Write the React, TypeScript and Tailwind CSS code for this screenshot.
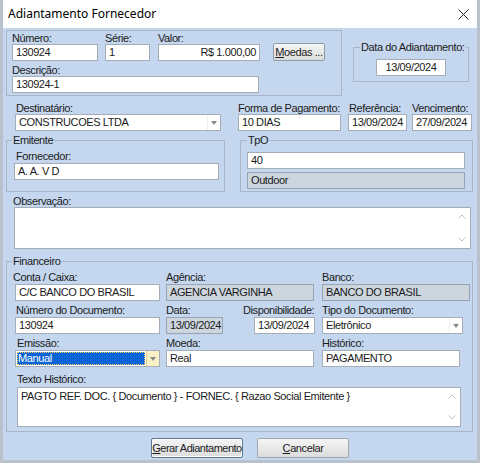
import type { ReactNode } from "react";

function Label({ children, className = "" }: { children: ReactNode; className?: string }) {
    return <div className={`h-[12px] leading-[12px] whitespace-nowrap ${className}`}>{children}</div>;
}

function Field({
    value,
    className = "",
    readOnly = false,
    align = "left",
}: {
    value: string;
    className?: string;
    readOnly?: boolean;
    align?: "left" | "right" | "center";
}) {
    const alignCls = align === "right" ? "text-right" : align === "center" ? "text-center" : "text-left";
    return (
        <div
            className={`h-[17px] border px-[3px] leading-[15px] whitespace-nowrap overflow-hidden ${alignCls} ${
                readOnly ? "bg-[#cdd5df] border-[#98a4b2]" : "bg-white border-[#a4adb8]"
            } ${className}`}
        >
            {value}
        </div>
    );
}

function Arrow() {
    return (
        <svg width="6" height="4" viewBox="0 0 6 4">
            <path d="M0 0 L6 0 L3 4 Z" fill="#8a8a8a" />
        </svg>
    );
}

function Combo({ value, className = "", focused = false }: { value: string; className?: string; focused?: boolean }) {
    return (
        <div className={`flex h-[17px] border border-[#a4adb8] bg-white ${className}`}>
            {focused ? (
                <div className="flex-1 p-[1px]">
                    <div className="h-full bg-[#0a64d6] text-white leading-[13px] px-[1px] outline-1 outline-dotted outline-[#f5d36a] -outline-offset-1">
                        {value}
                    </div>
                </div>
            ) : (
                <div className="flex-1 px-[3px] leading-[15px] whitespace-nowrap overflow-hidden">{value}</div>
            )}
            <div
                className={`w-[13px] flex items-center justify-center border-l ${
                    focused ? "bg-[#fbf1c6] border-[#e2cf8c]" : "bg-white border-[#eceff2]"
                }`}
            >
                <Arrow />
            </div>
        </div>
    );
}

function Memo({ value = "", className = "" }: { value?: string; className?: string }) {
    return (
        <div className={`flex border border-[#a4adb8] bg-white ${className}`}>
            <div className="flex-1 px-[3px] pt-[2px] leading-[13px] whitespace-nowrap overflow-hidden">{value}</div>
            <div className="w-[16px] flex flex-col items-center justify-between py-[6px]">
                <svg width="8" height="5" viewBox="0 0 8 5">
                    <path d="M0.5 4.5 L4 1 L7.5 4.5" fill="none" stroke="#c3c3c3" strokeWidth="1" />
                </svg>
                <svg width="8" height="5" viewBox="0 0 8 5">
                    <path d="M0.5 0.5 L4 4 L7.5 0.5" fill="none" stroke="#c3c3c3" strokeWidth="1" />
                </svg>
            </div>
        </div>
    );
}

function Group({
    title,
    className = "",
    legendClass = "ml-[5px]",
    children,
}: {
    title: string;
    className?: string;
    legendClass?: string;
    children: ReactNode;
}) {
    return (
        <fieldset className={`border border-[#aab6c6] ${className}`}>
            <legend className={`px-[1px] h-[12px] leading-[12px] ${legendClass}`}>{title}</legend>
            {children}
        </fieldset>
    );
}

export default function App() {
    return (
        <div className="w-[480px] h-[463px] flex flex-col border-l-[3px] border-r-[3px] border-b-[3px] border-[#b9c2cc] bg-white text-[11px] text-[#1b1b1b] font-['Liberation_Sans',Arial,sans-serif] tracking-[-0.4px]">
            {/* title bar */}
            <div className="h-[28px] shrink-0 flex items-center justify-between pl-[5px] pr-[8px] bg-white">
                <span className="text-[12px] tracking-normal font-['Noto_Sans','Open_Sans',sans-serif] text-black">
                    Adiantamento Fornecedor
                </span>
                <svg width="11" height="11" viewBox="0 0 11 11">
                    <path d="M0.5 0.5 L10.5 10.5 M10.5 0.5 L0.5 10.5" stroke="#222" strokeWidth="1" />
                </svg>
            </div>

            <div className="flex-1 bg-[#c5d7ee] flex flex-col">
                {/* header */}
                <div className="flex items-start">
                    <div className="ml-[3px] mt-[2px] w-[336px] h-[66px] border border-[#aab6c6] pl-[5px] pt-[1px]">
                        <div className="flex items-end">
                            <div className="w-[86px]">
                                <Label>Número:</Label>
                                <Field value="130924" />
                            </div>
                            <div className="ml-[7px] w-[45px]">
                                <Label>Série:</Label>
                                <Field value="1" />
                            </div>
                            <div className="ml-[8px] w-[102px]">
                                <Label>Valor:</Label>
                                <Field value="R$ 1.000,00" align="right" />
                            </div>
                            <button
                                type="button"
                                className="ml-[13px] w-[52px] h-[18px] border border-[#8f9aa7] rounded-[2px] bg-linear-to-b from-[#f5f5f5] to-[#dcdcdc] leading-[16px] whitespace-nowrap"
                            >
                                <span className="underline">M</span>oedas ...
                            </button>
                        </div>
                        <div className="mt-[3px]">
                            <Label>Descrição:</Label>
                            <Field value="130924-1" className="w-[247px]" />
                        </div>
                    </div>

                    <Group title="Data do Adiantamento:" className="ml-[11px] mt-[13px] w-[116px] h-[41px]" legendClass="ml-[6px]">
                        <Field value="13/09/2024" align="center" className="mx-auto w-[70px] mt-[6px]" />
                    </Group>
                </div>

                {/* destinatário row */}
                <div className="flex mt-[6px]">
                    <div className="ml-[12px] w-[206px]">
                        <Label className="pl-[1px]">Destinatário:</Label>
                        <Combo value="CONSTRUCOES LTDA" />
                    </div>
                    <div className="ml-[17px] w-[103px]">
                        <Label>Forma de Pagamento:</Label>
                        <Field value="10 DIAS" />
                    </div>
                    <div className="ml-[7px] w-[59px]">
                        <Label className="pl-[1px]">Referência:</Label>
                        <Field value="13/09/2024" />
                    </div>
                    <div className="ml-[5px] w-[60px]">
                        <Label>Vencimento:</Label>
                        <Field value="27/09/2024" />
                    </div>
                </div>

                {/* emitente / tpo */}
                <div className="flex mt-[3px]">
                    <Group title="Emitente" className="ml-[3px] w-[219px] h-[58px]">
                        <div className="pl-[7px]">
                            <Label className="mt-[4px] pl-[2px]">Fornecedor:</Label>
                            <Field value="A. A. V D" className="mt-[1px] w-[205px]" />
                        </div>
                    </Group>
                    <Group title="TpO" className="ml-[15px] w-[233px] h-[58px]" legendClass="ml-[6px]">
                        <div className="pl-[6px]">
                            <Field value="40" className="mt-[6px] w-[218px]" />
                            <Field value="Outdoor" readOnly className="mt-[3px] w-[218px]" />
                        </div>
                    </Group>
                </div>

                {/* observação */}
                <Label className="ml-[10px] mt-[3px]">Observação:</Label>
                <Memo className="ml-[11px] w-[457px] h-[42px]" />

                {/* financeiro */}
                <Group title="Financeiro" className="ml-[3px] mt-[6px] w-[467px] h-[177px]">
                    <div className="pl-[8px]">
                        <div className="flex mt-[4px]">
                            <div className="w-[145px]">
                                <Label className="-ml-[2px]">Conta / Caixa:</Label>
                                <Field value="C/C BANCO DO BRASIL" className="mt-[1px]" />
                            </div>
                            <div className="ml-[6px] w-[148px]">
                                <Label>Agência:</Label>
                                <Field value="AGENCIA VARGINHA" readOnly className="mt-[1px]" />
                            </div>
                            <div className="ml-[8px] w-[148px]">
                                <Label>Banco:</Label>
                                <Field value="BANCO DO BRASIL" readOnly className="mt-[1px]" />
                            </div>
                        </div>

                        <div className="flex mt-[3px]">
                            <div className="w-[145px]">
                                <Label className="pl-[1px]">Número do Documento:</Label>
                                <Field value="130924" className="mt-[1px]" />
                            </div>
                            <div className="ml-[6px] w-[57px]">
                                <Label>Data:</Label>
                                <Field value="13/09/2024" readOnly className="mt-[1px]" />
                            </div>
                            <div className="ml-[20px] w-[72px] flex flex-col">
                                <Label>Disponibilidade:</Label>
                                <Field value="13/09/2024" className="mt-[1px] ml-auto w-[61px]" />
                            </div>
                            <div className="ml-[7px] w-[141px]">
                                <Label>Tipo do Documento:</Label>
                                <Combo value="Eletrônico" className="mt-[1px]" />
                            </div>
                        </div>

                        <div className="flex mt-[3px]">
                            <div className="w-[145px]">
                                <Label className="pl-[2px]">Emissão:</Label>
                                <Combo value="Manual" focused className="mt-[1px]" />
                            </div>
                            <div className="ml-[6px] w-[148px]">
                                <Label>Moeda:</Label>
                                <Field value="Real" className="mt-[1px]" />
                            </div>
                            <div className="ml-[8px] w-[138px]">
                                <Label>Histórico:</Label>
                                <Field value="PAGAMENTO" className="mt-[1px]" />
                            </div>
                        </div>

                        <Label className="mt-[6px] pl-[2px]">Texto Histórico:</Label>
                        <Memo
                            value="PAGTO REF. DOC. { Documento } - FORNEC. { Razao Social Emitente }"
                            className="ml-[2px] mt-[2px] w-[444px] h-[40px]"
                        />
                    </div>
                </Group>

                {/* buttons */}
                <div className="flex mt-[6px]">
                    <button
                        type="button"
                        className="ml-[148px] w-[92px] h-[20px] border border-[#5d7894] rounded-[2px] bg-linear-to-b from-[#f5f5f5] to-[#dcdcdc] shadow-[inset_0_0_0_1px_#ffffff] whitespace-nowrap tracking-[-0.5px] leading-[18px]"
                    >
                        <span className="underline">G</span>erar Adiantamento
                    </button>
                    <button
                        type="button"
                        className="ml-[14px] w-[92px] h-[20px] border border-[#a3a9b0] rounded-[2px] bg-linear-to-b from-[#f5f5f5] to-[#dcdcdc] whitespace-nowrap leading-[18px]"
                    >
                        <span className="underline">C</span>ancelar
                    </button>
                </div>
            </div>
        </div>
    );
}
